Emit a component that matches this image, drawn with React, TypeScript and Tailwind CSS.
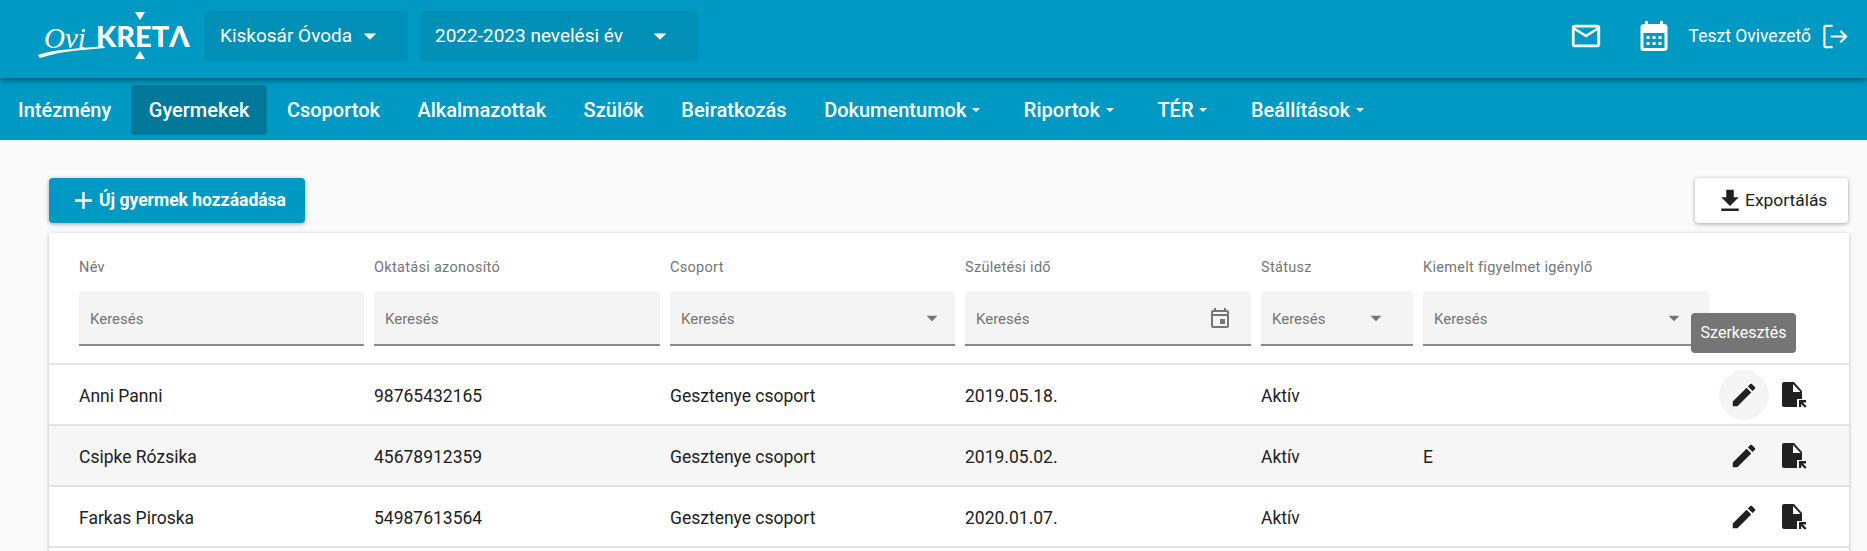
import React from 'react';
import { MdAdd, MdArrowDropDown, MdCalendarMonth, MdEdit, MdFileDownload, MdMailOutline, MdOutlineEvent } from 'react-icons/md';

const NAV_ITEMS = [
  { label: 'Intézmény' },
  { label: 'Gyermekek', active: true },
  { label: 'Csoportok' },
  { label: 'Alkalmazottak' },
  { label: 'Szülők' },
  { label: 'Beiratkozás' },
  { label: 'Dokumentumok', menu: true },
  { label: 'Riportok', menu: true },
  { label: 'TÉR', menu: true },
  { label: 'Beállítások', menu: true },
];

const ROWS = [
  { name: 'Anni Panni', id: '98765432165', group: 'Gesztenye csoport', birth: '2019.05.18.', status: 'Aktív', flag: '' },
  { name: 'Csipke Rózsika', id: '45678912359', group: 'Gesztenye csoport', birth: '2019.05.02.', status: 'Aktív', flag: 'E' },
  { name: 'Farkas Piroska', id: '54987613564', group: 'Gesztenye csoport', birth: '2020.01.07.', status: 'Aktív', flag: '' },
];

const COLUMNS = 'grid grid-cols-[295px_296px_295px_296px_162px_1fr] pl-[30px]';

const Logo = () => (
  <div className="relative ml-[38px] h-[60px] w-[148px] shrink-0 text-white">
    <span className="absolute left-[6px] top-[14px] font-['Liberation_Serif',serif] text-[29px] italic leading-[36px]">Ovi</span>
    <span className="absolute left-[58px] top-[12px] font-['Lato',sans-serif] text-[29px] font-black leading-[36px]">KRETΛ</span>
    <svg className="absolute left-0 top-0" width="148" height="60" viewBox="0 0 148 60" fill="white">
      <path d="M97 6h10l-5 8z" />
      <path d="M97 53h10l-5-8z" />
      <path d="M0 49c16-6 40-6 66-9l1 2c-24 2-44 3-65 10z" />
    </svg>
  </div>
);

const HeaderSelect = ({ label, className }: { label: string; className: string }) => (
  <div className={`flex h-[50px] items-center justify-between rounded-[4px] bg-[#0090b7] pl-[15px] pr-[23px] text-[19px] ${className}`}>
    <span>{label}</span>
    <MdArrowDropDown size={30} />
  </div>
);

const FilterField = ({ label, icon, iconPad }: { label: string; icon?: 'select' | 'date'; iconPad?: string }) => (
  <div className="w-full pr-[10px]">
    <div className="mb-[14px] h-[20px] pt-px text-[14.5px] leading-[20px] tracking-[0.3px] text-[#757575]">{label}</div>
    <div className={`flex h-[55px] items-center justify-between rounded-t-[4px] border-b-[2px] border-[#8a8a8a] bg-[#f4f4f4] pl-[11px] text-[15px] text-[#757575] ${iconPad ?? ''}`}>
      <span className="pt-[3px]">Keresés</span>
      {icon === 'select' && <MdArrowDropDown size={26} />}
      {icon === 'date' && <MdOutlineEvent size={24} />}
    </div>
  </div>
);

const FileLinkIcon = () => (
  <svg width="26" height="26" viewBox="0 0 26 26" fill="#212121">
    <path d="M2 0h10l8 9v8h-5v8H2a2 2 0 0 1-2-2V2a2 2 0 0 1 2-2z" />
    <path d="M11 2v8h7.500z" fill="white" />
    <path d="M17 18h7v2.400h-3.200l3.800 3.800-1.700 1.600-3.700-3.800V25H17z" />
  </svg>
);

const App: React.FC = () => {
  return (
    <div className="h-[551px] w-[1867px] overflow-hidden bg-[#fafafa] font-['Roboto',sans-serif] text-[#212121]">
      {/* Top bar */}
      <header className="relative z-10 flex h-[78px] items-center bg-[#0099c3] pb-[6px] text-white shadow-[0_2px_6px_rgba(0,0,0,0.45)]">
        <Logo />
        <HeaderSelect label="Kiskosár Óvoda" className="ml-[19px] w-[203px]" />
        <HeaderSelect label="2022-2023 nevelési év" className="ml-[12px] w-[278px]" />
        <div className="ml-auto flex items-center pr-[19px]">
          <MdMailOutline size={34} />
          <MdCalendarMonth size={36} className="ml-[33px]" />
          <span className="ml-[17px] text-[17.5px]">Teszt Ovivezető</span>
          <svg className="ml-[12px]" width="25" height="25" viewBox="0 0 26 26" fill="none" stroke="white" strokeWidth="2.200">
            <path d="M10 2H2.500a1 1 0 0 0-1 1v20a1 1 0 0 0 1 1H10" />
            <path d="M8 13h16M18 7l6 6-6 6" />
          </svg>
        </div>
      </header>

      {/* Navigation */}
      <nav className="flex h-[62px] items-center gap-[1.5px] bg-[#0099c3] pt-[1px] text-[20px] font-medium text-white">
        {NAV_ITEMS.map((item) => (
          <div
            key={item.label}
            className={`flex h-[50px] items-center rounded-[4px] px-[18px] ${item.active ? 'bg-[#00789a]' : ''}`}
          >
            {item.label}
            {item.menu && <span className="ml-[6px] mr-[6px] h-0 w-0 border-x-[4.5px] border-t-[4.5px] border-x-transparent border-t-white" />}
          </div>
        ))}
      </nav>

      <main className="pl-[49px] pr-[18px] pt-[38px]">
        <div className="flex items-center justify-between pr-[1px]">
          <button className="flex h-[45px] w-[256px] items-center rounded-[4px] bg-[#0099c3] pl-[20px] text-[17.5px] font-bold text-white shadow-[0_1px_4px_rgba(0,0,0,0.35)]">
            <MdAdd size={29} className="mr-[1px]" />
            Új gyermek hozzáadása
          </button>
          <button className="flex h-[45px] w-[153px] items-center rounded-[4px] bg-white pl-[20px] text-[17.4px] text-[#212121] shadow-[0_1px_4px_rgba(0,0,0,0.35)]">
            <MdFileDownload size={30} />
            Exportálás
          </button>
        </div>

        <section className="relative mt-[10px] bg-white pb-[40px] shadow-[0_1px_4px_rgba(0,0,0,0.25)]">
          {/* Filter row */}
          <div className={`${COLUMNS} h-[132px] items-start border-b-[2px] border-[#e4e4e4] pt-[24px]`}>
            <FilterField label="Név" />
            <FilterField label="Oktatási azonosító" />
            <FilterField label="Csoport" icon="select" iconPad="pr-[10px]" />
            <FilterField label="Születési idő" icon="date" iconPad="pr-[19px]" />
            <FilterField label="Státusz" icon="select" iconPad="pr-[24px]" />
            <div className="w-[296px]">
              <FilterField label="Kiemelt figyelmet igénylő" icon="select" iconPad="pr-[22px]" />
            </div>
          </div>

          {ROWS.map((row, index) => (
            <div
              key={row.id}
              className={`${COLUMNS} h-[61px] items-center border-b-[2px] border-[#e4e4e4] pt-[3px] text-[17.5px] ${index === 1 ? 'bg-[#f6f6f6]' : 'bg-white'}`}
            >
              <span>{row.name}</span>
              <span>{row.id}</span>
              <span>{row.group}</span>
              <span>{row.birth}</span>
              <span>{row.status}</span>
              <div className="-mt-[3px] flex items-center justify-between pr-[41px]">
                <span className="pt-[3px]">{row.flag}</span>
                <div className="flex items-center gap-[13px]">
                  <span className={`flex h-[50px] w-[50px] items-center justify-center rounded-full ${index === 0 ? 'bg-[#f5f5f5]' : ''}`}>
                    <MdEdit size={30} />
                  </span>
                  <FileLinkIcon />
                </div>
              </div>
            </div>
          ))}

          {/* Tooltip over the first edit button */}
          <div className="absolute left-[1642px] top-[80px] flex h-[40px] w-[105px] items-center justify-center rounded-[4px] bg-[#757575] text-[16px] text-white">
            Szerkesztés
          </div>
        </section>
      </main>
    </div>
  );
};

export default App;
